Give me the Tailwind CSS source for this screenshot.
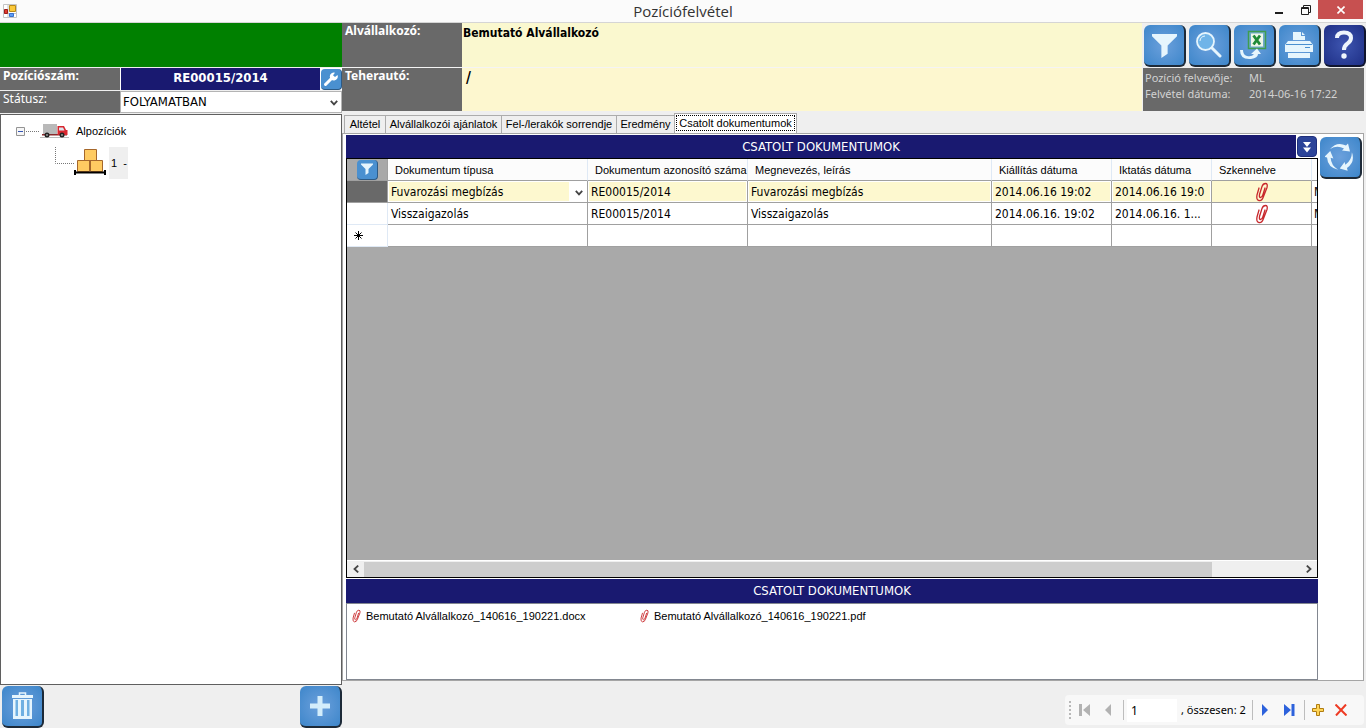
<!DOCTYPE html>
<html lang="hu">
<head>
<meta charset="utf-8">
<title>Pozíciófelvétel</title>
<script src="https://cdn.jsdelivr.net/npm/@tailwindcss/browser@4"></script>
</head>
<body class="h-screen overflow-hidden bg-[#efefef] text-black flex flex-col text-xs font-['DejaVu_Sans_Condensed','DejaVu_Sans',sans-serif]">

<svg class="hidden" aria-hidden="true">
  <defs>
    <symbol id="clip" viewBox="0 0 16 20">
      <path d="M5 6 L3 13 Q2 18 5 18.500 Q8 19 9.500 14.500 L13 5.500 Q14 1.500 11.500 1.500 Q9 1.500 8 4.500 L5.500 12.500 Q5 15.500 6.500 15.500 Q8 15.500 8.800 13 L11 6" fill="none" stroke="#c8282c" stroke-width="1.300" stroke-linecap="round"/>
    </symbol>
    <symbol id="funnel" viewBox="0 0 24 24">
      <path d="M0 1 H24 V3 L15 12 V20 L9 24 V12 L0 3 Z" fill="#e6f5fd"/>
    </symbol>
    <symbol id="chev" viewBox="0 0 8 6">
      <path d="M0.800 0.800 L4 4.300 L7.200 0.800" fill="none" stroke="#444" stroke-width="1.800"/>
    </symbol>
  </defs>
</svg>

<header class="h-[23px] shrink-0 bg-[#fbfbfb] border-b border-[#d5d5d5] grid grid-cols-[1fr_auto_1fr] items-start">
  <svg class="w-[14px] h-[14px] ml-[3px] mt-1" viewBox="0 0 14 14">
    <path d="M0.500 0.500 H13.500 V13.500 H0.500 Z M5 0.500 V13.500 M0.500 9.500 H13.500" fill="#fff" stroke="#c4c4c4"/>
    <path d="M6.500 1.500 H12.500 V7.500 H6.500 Z" fill="#fbc93a" stroke="#b98a17"/>
    <path d="M1.500 5.500 H4.500 V9.500 H1.500 Z" fill="#e03a2e" stroke="#9e1d18"/>
    <path d="M6.500 9.500 H10.500 V12.500 H6.500 Z" fill="#5f9df2" stroke="#3970cd"/>
  </svg>
  <h1 class="text-[15px] leading-[23px] text-[#333] font-['Open_Sans',sans-serif]">Pozíciófelvétel</h1>
  <div class="flex justify-end pr-[3px]">
    <button aria-label="Kis méret" class="w-7 h-[19px] flex items-center justify-center"><svg class="w-2 h-[10px]" viewBox="0 0 8 10"><path d="M0 7 H8 V9 H0 Z" fill="#1e1e1e"/></svg></button>
    <button aria-label="Visszaállítás" class="w-[25px] h-[19px] flex items-center justify-center"><svg class="w-[10px] h-[10px]" viewBox="0 0 10 10"><path d="M2.500 2 V0.500 H9.500 V7.500 H8" fill="none" stroke="#1e1e1e"/><path d="M0.500 2.500 H7.500 V9.500 H0.500 Z M0 3.500 H8" fill="none" stroke="#1e1e1e"/></svg></button>
    <button aria-label="Bezárás" class="w-[45px] h-[19px] bg-[#c75050] flex items-center justify-center"><svg class="w-2 h-2" viewBox="0 0 8 8"><path d="M0.500 0.500 L7.500 7.500 M7.500 0.500 L0.500 7.500" stroke="#fff" stroke-width="1.600"/></svg></button>
  </div>
</header>

<div class="flex-1 min-h-0 flex">
  <aside class="w-[342px] shrink-0 flex flex-col">
    <div class="h-[44px] bg-[#008000]"></div>
    <div class="mt-px h-[22px] flex bg-white">
      <div class="w-[120px] bg-[#696969] text-white font-bold pl-[3px] leading-4 font-['Noto_Sans',sans-serif]">Pozíciószám:</div>
      <div class="ml-px flex-1 bg-[#191970] text-white font-bold text-center text-[13px] leading-[19px]">RE00015/2014</div>
      <button aria-label="Beállítás" class="ml-px w-[21px] h-[21px] mt-px rounded-sm bg-[#4a90d0] border-r border-b border-[#2d5a85] flex items-center justify-center"><svg class="w-4 h-4" viewBox="0 0 16 16"><path d="M2.500 13.500 L9 7" stroke="#fff" stroke-width="3" stroke-linecap="round"/><path d="M14.500 4 L12 6 L10 4.300 L12 1.700 A4 4 0 1 0 14.500 4 Z" fill="#fff"/></svg></button>
    </div>
    <div class="mt-px h-[22px] flex bg-white">
      <label for="status" class="w-[120px] bg-[#696969] text-white pl-[3px] leading-4 font-['Noto_Sans',sans-serif]">Státusz:</label>
      <div class="relative flex-1">
        <select id="status" class="appearance-none w-full h-full bg-white border border-[#b4b4b4] pl-0.5 text-[13px] leading-[20px]"><option>FOLYAMATBAN</option></select>
        <svg class="absolute right-1 top-[9px] w-2 h-[6px] pointer-events-none"><use href="#chev"/></svg>
      </div>
    </div>
    <div class="mt-px flex-1 bg-white border border-[#5f5f5f] pt-1">
      <ul class="text-[11px] font-['Liberation_Sans',sans-serif]">
        <li>
          <div class="flex items-center h-6 pl-[15px]">
            <svg class="w-[24px] h-[9px]" viewBox="0 0 24 9"><path d="M0.500 0.500 H8.500 V8.500 H0.500 Z" fill="#f6f6f6" stroke="#949494"/><path d="M2 4.500 H7" stroke="#3455b5"/><path d="M10 4.500 H24" stroke="#777" stroke-dasharray="1 1"/></svg>
            <svg class="w-[29px] h-4" viewBox="0 0 29 16"><path d="M0 14.500 H29" stroke="#bbb"/><path d="M3 1 H17 V11 H3 Z" fill="#b9b9b9"/><path d="M2 11 H27 V12.500 H2 Z" fill="#8a2a2c"/><path d="M17.500 3 H24 L26 7 H27.500 V12 H17.500 Z" fill="#d8262f"/><path d="M19 4.500 H23 L24.500 7.500 H19 Z" fill="#d9e4ec"/><circle cx="7" cy="12" r="2.500" fill="#222"/><circle cx="22" cy="12" r="2.500" fill="#222"/><circle cx="7" cy="12" r="1" fill="#999"/><circle cx="22" cy="12" r="1" fill="#999"/></svg>
            <span class="ml-[7px]">Alpozíciók</span>
          </div>
          <ul>
            <li class="flex items-center mt-1 pl-[54px] h-8">
              <svg class="w-[19px] h-8" viewBox="0 0 19 32"><path d="M0.500 0 V16.500 H19" fill="none" stroke="#777" stroke-dasharray="1 1"/></svg>
              <svg class="w-8 h-8" viewBox="0 0 32 32"><path d="M10.500 2.500 H22.500 V13.500 H10.500 Z M3.500 13.500 H15.500 V24.500 H3.500 Z M16.500 13.500 H28.500 V24.500 H16.500 Z" fill="#ffcb62" stroke="#a5672b"/><path d="M1 23 V28 M31 23 V28" stroke="#000" stroke-width="2"/><path d="M0 25.500 H32" stroke="#000" stroke-width="2"/></svg>
              <span class="ml-[3px] pl-0.5 w-[19px] h-8 leading-8 bg-[#efefef] whitespace-pre">1  -</span>
            </li>
          </ul>
        </li>
      </ul>
    </div>
    <div class="h-[43px] shrink-0 flex justify-between items-end pl-0.5">
      <button aria-label="Törlés" class="w-[42px] h-[42px] rounded-md bg-radial from-[#6ba0dc] to-[#3c86ca] border-r-2 border-b-2 border-[#1d2a38] flex items-center justify-center"><svg class="w-[21px] h-7" viewBox="0 0 21 28"><path d="M7.500 3 V1 H13.500 V3" fill="none" stroke="#e6f5fd" stroke-width="1.500"/><path d="M0 3 H21 V6 H0 Z" fill="#e6f5fd"/><path d="M1 7 H20 V27 H1 Z" fill="#e6f5fd"/><path d="M3.500 8 H6 V24 H3.500 Z M9 8 H12 V24 H9 Z M15 8 H17.500 V24 H15 Z" fill="#6fb0e2"/></svg></button>
      <button aria-label="Hozzáadás" class="w-[42px] h-[42px] rounded-md bg-radial from-[#6ba0dc] to-[#3c86ca] border-r-2 border-b-2 border-[#1d2a38] flex items-center justify-center"><svg class="w-5 h-5" viewBox="0 0 20 20"><path d="M0 10 H20 M10 0 V20" stroke="#d3edfb" stroke-width="5"/></svg></button>
    </div>
  </aside>

  <main class="flex-1 min-w-0 flex flex-col">
    <section class="h-[88px] shrink-0 flex">
      <dl class="flex-1 grid grid-cols-[120px_1fr] grid-rows-[44px_43px] gap-y-px bg-[#f4f4f4] font-bold text-xs">
        <dt class="bg-[#696969] text-white pl-[3px] leading-4 font-['Noto_Sans',sans-serif]">Alvállalkozó:</dt>
        <dd class="bg-[#faf8cf] pl-px leading-5">Bemutató Alvállalkozó</dd>
        <dt class="bg-[#696969] text-white pl-[3px] leading-4 font-['Noto_Sans',sans-serif]">Teherautó:</dt>
        <dd class="bg-[#fdf7cf] pl-1 text-[15px] leading-5">/</dd>
      </dl>
      <div class="w-[224px] shrink-0 pt-0.5">
        <div class="flex gap-[3px] pl-0.5">
          <button aria-label="Szűrés" class="w-[42px] h-[42px] shrink-0 rounded-md bg-radial from-[#6ba0dc] to-[#3c86ca] border-r-2 border-b-2 border-[#1d2a38] flex items-center justify-center"><svg class="w-[25px] h-[25px]"><use href="#funnel"/></svg></button>
          <button aria-label="Keresés" class="w-[42px] h-[42px] shrink-0 rounded-md bg-radial from-[#6ba0dc] to-[#3c86ca] border-r-2 border-b-2 border-[#1d2a38] flex items-center justify-center"><svg class="w-[26px] h-[26px]" viewBox="0 0 26 26"><circle cx="9.500" cy="9.500" r="8.500" fill="#6fb4e8" stroke="#e6f5fd" stroke-width="1.800"/><path d="M4 9 A5.500 5.500 0 0 1 9 4" fill="none" stroke="#e6f5fd"/><path d="M16 16 L24 24" stroke="#e6f5fd" stroke-width="3" stroke-linecap="round"/></svg></button>
          <button aria-label="Excel export" class="w-[42px] h-[42px] shrink-0 rounded-md bg-radial from-[#6ba0dc] to-[#3c86ca] border-r-2 border-b-2 border-[#1d2a38] flex items-center justify-center"><svg class="w-[30px] h-8" viewBox="0 0 30 32"><path d="M9.500 2.500 H26.500 V19.500 H9.500 Z" fill="#6fa9c8" stroke="#3e9d50" stroke-width="1.500"/><path d="M12 4.500 H24 V17.500 H12 Z" fill="#edf6e7"/><path d="M14.500 6.500 L21 15.500 M21 6.500 L14.500 15.500" stroke="#1f8a37" stroke-width="2.800"/><path d="M1 21 Q1 31 12 30 Q19 29 19 25 H22 L18 19.500 L12 25 H15 Q13 28 8 27 Q4 26 4 21 Z" fill="#e6f5fd"/></svg></button>
          <button aria-label="Nyomtatás" class="w-[42px] h-[42px] shrink-0 rounded-md bg-radial from-[#6ba0dc] to-[#3c86ca] border-r-2 border-b-2 border-[#1d2a38] flex items-center justify-center"><svg class="w-7 h-7" viewBox="0 0 28 28"><path d="M8 9 V1 H16 V5 H20 V9 Z M17 1 L20 4 H17 Z" fill="#e6f5fd"/><path d="M3 10 H25 L28 14 V21 H0 V14 Z" fill="#e6f5fd"/><path d="M1 13.500 H27 M20 16.500 H25" stroke="#4a90d0"/><path d="M3 22 H25 V27 H3 Z" fill="#e6f5fd"/></svg></button>
          <button aria-label="Súgó" class="w-[42px] h-[42px] shrink-0 rounded-md bg-radial from-[#3e55b0] to-[#1f2f86] border-r-2 border-b-2 border-[#10152f] flex items-center justify-center"><svg class="w-5 h-[30px]" viewBox="0 0 20 30"><path d="M3 8 Q3 2.500 10 2.500 Q17 2.500 17 8 Q17 11 13 14 Q10 16 10 20" fill="none" stroke="#eef5fc" stroke-width="4"/><circle cx="10" cy="26" r="2.700" fill="#eef5fc"/></svg></button>
        </div>
        <dl class="mt-px ml-px mr-[2px] h-[43px] bg-[#696969] text-[#d2d2d2] text-[11px] leading-4 grid grid-cols-[104px_1fr] content-start pt-[2px] pl-0.5 font-['Noto_Sans',sans-serif]">
          <dt>Pozíció felvevője:</dt><dd>ML</dd>
          <dt>Felvétel dátuma:</dt><dd>2014-06-16 17:22</dd>
        </dl>
      </div>
    </section>

    <nav class="mt-[2px] h-5 shrink-0 flex items-end pl-[2px] text-[11px] font-['Liberation_Sans',sans-serif]" role="tablist">
      <button role="tab" class="h-[18px] w-[42px] border border-b-0 border-[#acacac] bg-[#efefef]">Altétel</button>
      <button role="tab" class="h-[18px] w-[116px] border border-l-0 border-b-0 border-[#acacac] bg-[#efefef]">Alvállalkozói ajánlatok</button>
      <button role="tab" class="h-[18px] w-[115px] border border-l-0 border-b-0 border-[#acacac] bg-[#efefef]">Fel-/lerakók sorrendje</button>
      <button role="tab" class="h-[18px] w-[57px] border border-x-0 border-b-0 border-[#acacac] bg-[#efefef]">Eredmény</button>
      <button role="tab" aria-selected="true" class="h-5 w-[123px] border border-b-0 border-[#acacac] bg-white p-px pb-0.5"><span class="block h-4 leading-[14px] border border-dotted border-black">Csatolt dokumentumok</span></button>
    </nav>

    <section class="flex-1 min-h-0 bg-white border border-[#a5a5a5] mr-[2px] flex pl-[3px] pt-px gap-0.5">
      <div class="flex-1 min-w-0 flex flex-col">
        <div class="h-[23px] shrink-0 flex">
          <h2 class="flex-1 bg-[#191970] text-white text-center text-[13px] leading-[23px]">CSATOLT DOKUMENTUMOK</h2>
          <button aria-label="Lenyitás" class="ml-px mt-px mr-px w-5 h-[21px] rounded-sm bg-[#2c4499] border border-[#1f2f7c] flex items-center justify-center"><svg class="w-2 h-3" viewBox="0 0 8 12"><path d="M0 1 H8 L4 6 Z M0 6.500 H8 L4 11.500 Z" fill="#fff"/></svg></button>
        </div>
        <div class="flex-1 min-h-0 border border-black bg-[#a9a9a9] flex flex-col">
          <div class="flex-1 min-h-0 overflow-hidden">
            <table class="table-fixed w-full border-separate border-spacing-0 text-left">
              <colgroup><col class="w-[41px]"><col class="w-[200px]"><col class="w-[160px]"><col class="w-[244px]"><col class="w-[120px]"><col class="w-[100px]"><col class="w-[100px]"><col></colgroup>
              <thead class="text-[11px] font-['Liberation_Sans',sans-serif]">
                <tr class="h-[22px] bg-[#fcfcfc]">
                  <th class="p-0 bg-[#a9a9a9] border-b border-r border-[#a0a0a0]"><button aria-label="Szűrő" class="block mx-auto w-[21px] h-[20px] rounded-sm bg-[#4a90d0] border-r border-b border-[#2d5a85]"><svg class="w-3 h-3 mx-auto"><use href="#funnel"/></svg></button></th>
                  <th class="p-0 pt-0.5 pl-[7px] font-normal border-b border-b-[#a0a0a0] border-r border-r-[#dfe9f5]">Dokumentum típusa</th>
                  <th class="p-0 pt-0.5 pl-[7px] font-normal whitespace-nowrap border-b border-b-[#a0a0a0] border-r border-r-[#dfe9f5]">Dokumentum azonosító száma</th>
                  <th class="p-0 pt-0.5 pl-[7px] font-normal border-b border-b-[#a0a0a0] border-r border-r-[#dfe9f5]">Megnevezés, leírás</th>
                  <th class="p-0 pt-0.5 pl-[7px] font-normal border-b border-b-[#a0a0a0] border-r border-r-[#dfe9f5]">Kiállítás dátuma</th>
                  <th class="p-0 pt-0.5 pl-[7px] font-normal border-b border-b-[#a0a0a0] border-r border-r-[#dfe9f5]">Iktatás dátuma</th>
                  <th class="p-0 pt-0.5 pl-[7px] font-normal border-b border-b-[#a0a0a0] border-r border-r-[#dfe9f5]">Szkennelve</th>
                  <th class="p-0 border-b border-[#a0a0a0]"></th>
                </tr>
              </thead>
              <tbody>
                <tr class="h-[22px] bg-white">
                  <th class="p-0 bg-[#696969] border-r border-b border-[#a0a0a0]"></th>
                  <td class="p-0 border-r border-b border-[#a0a0a0]"><div class="relative"><select aria-label="Dokumentum típusa" class="block appearance-none w-full h-[21px] border border-r-[18px] border-white bg-[#fdf8cf] pl-0.5"><option>Fuvarozási megbízás</option></select><svg class="absolute right-1 top-[9px] w-2 h-[6px] pointer-events-none"><use href="#chev"/></svg></div></td>
                  <td class="p-0 border-r border-b border-[#a0a0a0]"><input aria-label="Azonosító" value="RE00015/2014" class="block w-full h-[21px] border border-white bg-[#fdf8cf] pl-0.5"></td>
                  <td class="p-0 border-r border-b border-[#a0a0a0]"><input aria-label="Megnevezés" value="Fuvarozási megbízás" class="block w-full h-[21px] border border-white bg-[#fdf8cf] pl-0.5"></td>
                  <td class="p-0 border-r border-b border-[#a0a0a0]"><input aria-label="Kiállítás" value="2014.06.16 19:02" class="block w-full h-[21px] border border-white bg-[#fdf8cf] pl-0.5"></td>
                  <td class="p-0 border-r border-b border-[#a0a0a0]"><input aria-label="Iktatás" value="2014.06.16 19:0" class="block w-full h-[21px] border border-white bg-[#fdf8cf] pl-0.5"></td>
                  <td class="p-0 border-r border-b border-[#a0a0a0] bg-[#fdf8cf]"><svg class="block mx-auto w-4 h-5"><use href="#clip"/></svg></td>
                  <td class="p-0 pl-[2px] border-b border-[#a0a0a0] overflow-hidden whitespace-nowrap">M</td>
                </tr>
                <tr class="h-[22px] bg-white">
                  <th class="p-0 border-r border-b border-[#dfe9f5]"></th>
                  <td class="p-0 pt-px pl-[3px] border-r border-b border-[#a0a0a0]">Visszaigazolás</td>
                  <td class="p-0 pt-px pl-[3px] border-r border-b border-[#a0a0a0]">RE00015/2014</td>
                  <td class="p-0 pt-px pl-[3px] border-r border-b border-[#a0a0a0]">Visszaigazolás</td>
                  <td class="p-0 pt-px pl-[3px] border-r border-b border-[#a0a0a0]">2014.06.16. 19:02</td>
                  <td class="p-0 pt-px pl-[3px] border-r border-b border-[#a0a0a0]">2014.06.16. 1...</td>
                  <td class="p-0 border-r border-b border-[#a0a0a0]"><svg class="block mx-auto w-4 h-5"><use href="#clip"/></svg></td>
                  <td class="p-0 pt-px pl-[2px] border-b border-[#a0a0a0] overflow-hidden whitespace-nowrap">M</td>
                </tr>
                <tr class="h-[22px] bg-white">
                  <th class="p-0 pl-[7px] border-r border-b border-[#dfe9f5]"><svg class="w-[9px] h-[9px]" viewBox="0 0 9 9"><path d="M4.500 0 V9 M0 4.500 H9 M1.500 1.500 L7.500 7.500 M7.500 1.500 L1.500 7.500" stroke="#000"/></svg></th>
                  <td class="p-0 border-r border-b border-[#a0a0a0]"></td><td class="p-0 border-r border-b border-[#a0a0a0]"></td><td class="p-0 border-r border-b border-[#a0a0a0]"></td><td class="p-0 border-r border-b border-[#a0a0a0]"></td><td class="p-0 border-r border-b border-[#a0a0a0]"></td><td class="p-0 border-r border-b border-[#a0a0a0]"></td><td class="p-0 border-b border-[#a0a0a0]"></td>
                </tr>
              </tbody>
            </table>
          </div>
          <div class="h-[17px] shrink-0 bg-[#efefef] border-t border-white flex items-center">
            <button aria-label="Balra" class="w-[17px] h-4 flex items-center justify-center"><svg class="w-[6px] h-2" viewBox="0 0 6 8"><path d="M5.200 0.600 L1.500 4 L5.200 7.400" fill="none" stroke="#444" stroke-width="1.800"/></svg></button>
            <div class="flex-1 h-[15px]"><div class="h-full w-[90.6%] bg-[#cdcdcd]"></div></div>
            <button aria-label="Jobbra" class="w-[17px] h-4 flex items-center justify-center"><svg class="w-[6px] h-2" viewBox="0 0 6 8"><path d="M0.800 0.600 L4.500 4 L0.800 7.400" fill="none" stroke="#444" stroke-width="1.800"/></svg></button>
          </div>
        </div>
        <h2 class="mt-px h-6 shrink-0 bg-[#191970] text-white text-center text-[13px] leading-6">CSATOLT DOKUMENTUMOK</h2>
        <ul class="h-[77px] shrink-0 border border-[#828790] flex pt-1 pl-1 text-[11px] font-['Liberation_Sans',sans-serif]">
          <li class="w-[288px]"><a href="#" class="flex items-center gap-1 h-4"><svg class="w-[11px] h-[14px]"><use href="#clip"/></svg>Bemutató Alvállalkozó_140616_190221.docx</a></li>
          <li class="w-[288px]"><a href="#" class="flex items-center gap-1 h-4"><svg class="w-[11px] h-[14px]"><use href="#clip"/></svg>Bemutató Alvállalkozó_140616_190221.pdf</a></li>
        </ul>
      </div>
      <button aria-label="Frissítés" class="mt-0.5 mr-px w-[42px] h-[42px] shrink-0 rounded-md bg-radial from-[#6ba0dc] to-[#3c86ca] border-r-2 border-b-2 border-[#1d2a38] flex items-center justify-center"><svg class="w-[30px] h-[30px]" viewBox="0 0 30 30"><g fill="#e6f5fd"><path id="arc" d="M5 7 Q12 -1 21 3.500 L23 1.500 L25 9.500 L17 8.500 L19 6.500 Q12 3 5 7 Z"/><use href="#arc" transform="rotate(120 15 15)"/><use href="#arc" transform="rotate(240 15 15)"/></g></svg></button>
    </section>

    <footer class="h-[47px] shrink-0 flex justify-end pt-[14px] pr-[2px]">
      <div class="h-[30px] w-[299px] bg-[#f8f8f8] rounded-sm flex items-center pl-1 font-['Noto_Sans',sans-serif]">
        <svg class="w-0.5 h-[18px]" viewBox="0 0 2 18"><path d="M1 0 V18" stroke="#b8b8b8" stroke-width="2" stroke-dasharray="2 2"/></svg>
        <button aria-label="Első" class="ml-[8px] w-[11px]"><svg class="w-[11px] h-3" viewBox="0 0 11 12"><path d="M0 0 H3 V12 H0 Z M11 0 V12 L4 6 Z" fill="#b2b2b2"/></svg></button>
        <button aria-label="Előző" class="ml-[15px] w-[6px]"><svg class="w-[6px] h-3" viewBox="0 0 6 12"><path d="M6 0 V12 L0 6 Z" fill="#b2b2b2"/></svg></button>
        <div class="ml-3 w-px h-5 bg-[#bdbdbd]"></div>
        <input aria-label="Pozíció" value="1" class="ml-[3px] w-[50px] h-[23px] bg-white pl-1">
        <span class="ml-1 w-[66px] whitespace-nowrap text-[11px]">, összesen: 2</span>
        <div class="ml-[5px] w-px h-5 bg-[#bdbdbd]"></div>
        <button aria-label="Következő" class="ml-[9px] w-[6px]"><svg class="w-[6px] h-3" viewBox="0 0 6 12"><path d="M0 0 L6 6 L0 12 Z" fill="#2d62dc"/></svg></button>
        <button aria-label="Utolsó" class="ml-4 w-[11px]"><svg class="w-[11px] h-3" viewBox="0 0 11 12"><path d="M0 0 L7 6 L0 12 Z M7.500 0 H10.500 V12 H7.500 Z" fill="#2d62dc"/></svg></button>
        <div class="ml-[9px] w-px h-5 bg-[#bdbdbd]"></div>
        <button aria-label="Új" class="ml-[7px] w-3"><svg class="w-3 h-3" viewBox="0 0 12 12"><path d="M4.500 0.500 H7.500 V4.500 H11.500 V7.500 H7.500 V11.500 H4.500 V7.500 H0.500 V4.500 H4.500 Z" fill="#ffd556" stroke="#b07d12"/></svg></button>
        <button aria-label="Törlés" class="ml-[11px] w-3"><svg class="w-3 h-3" viewBox="0 0 12 12"><path d="M0.500 0.500 L11.500 11.500 M11 0.500 L1 11.500" stroke="#ee3b24" stroke-width="2"/></svg></button>
      </div>
    </footer>
  </main>
</div>
</body>
</html>
